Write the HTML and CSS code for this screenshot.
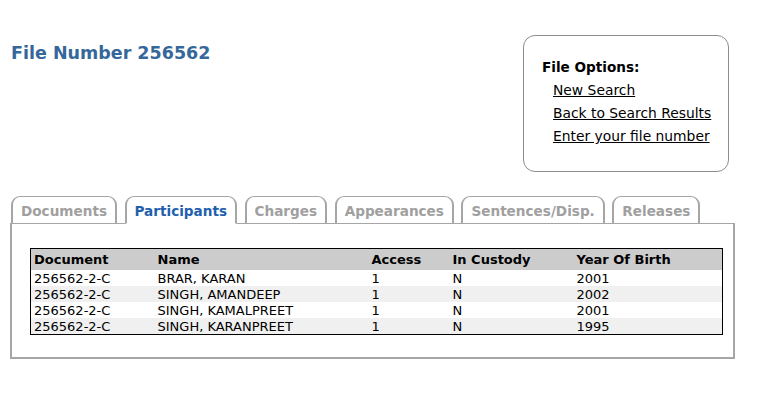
FILE: index.html
```html
<!DOCTYPE html>
<html>
<head>
<meta charset="utf-8">
<link rel="stylesheet" href="styles.css">
</head>
<body>
<div class="page">
  <div class="top">
    <h1 class="title">File Number 256562</h1>
    <div class="options">
      <div class="options-head">File Options:</div>
      <a href="#" class="opt">New Search</a>
      <a href="#" class="opt">Back to Search Results</a>
      <a href="#" class="opt">Enter your file number</a>
    </div>
  </div>
  <div class="tabs">
    <div class="tab">Documents</div>
    <div class="tab active">Participants</div>
    <div class="tab">Charges</div>
    <div class="tab">Appearances</div>
    <div class="tab">Sentences/Disp.</div>
    <div class="tab">Releases</div>
  </div>
  <div class="panel">
    <table class="grid">
      <colgroup>
        <col class="c1"><col class="c2"><col class="c3"><col class="c4"><col class="c5">
      </colgroup>
      <thead>
        <tr><th>Document</th><th>Name</th><th>Access</th><th>In Custody</th><th>Year Of Birth</th></tr>
      </thead>
      <tbody>
        <tr><td>256562-2-C</td><td>BRAR, KARAN</td><td>1</td><td>N</td><td>2001</td></tr>
        <tr class="alt"><td>256562-2-C</td><td>SINGH, AMANDEEP</td><td>1</td><td>N</td><td>2002</td></tr>
        <tr><td>256562-2-C</td><td>SINGH, KAMALPREET</td><td>1</td><td>N</td><td>2001</td></tr>
        <tr class="alt"><td>256562-2-C</td><td>SINGH, KARANPREET</td><td>1</td><td>N</td><td>1995</td></tr>
      </tbody>
    </table>
  </div>
</div>
</body>
</html>
```

FILE: styles.css
```css
html, body {
  margin: 0;
  padding: 0;
  background: #ffffff;
}
body {
  font-family: "DejaVu Sans", Verdana, sans-serif;
  color: #000;
}
.page {
  padding: 0 23px 0 10px;
}
.top {
  display: flex;
  justify-content: space-between;
  align-items: flex-start;
}
.title {
  margin: 42px 0 0 1px;
  font-size: 17.5px;
  line-height: 22px;
  font-weight: bold;
  color: #35679a;
}
.options {
  margin-top: 35px;
  margin-right: 6px;
  width: 206px;
  height: 137px;
  box-sizing: border-box;
  border: 1px solid #8c8c8c;
  border-radius: 12px;
  padding: 21px 0 0 18px;
  display: flex;
  flex-direction: column;
  align-items: flex-start;
}
.options-head {
  font-weight: bold;
  font-size: 13.6px;
  line-height: 20px;
  margin-bottom: 2px;
}
.opt {
  margin-left: 11px;
  font-size: 13.85px;
  line-height: 23px;
  color: #000;
  text-decoration: underline;
}
.tabs {
  display: flex;
  gap: 7.5px;
  margin-top: 24px;
  padding-left: 1px;
  position: relative;
  z-index: 1;
  margin-bottom: -1px;
}
.tab {
  height: 28px;
  box-sizing: border-box;
  border: 2px solid #a6a6a6;
  border-top-width: 1px;
  border-bottom: 1px solid #a6a6a6;
  border-radius: 9px 9px 0 0;
  padding: 4px 8px 0;
  font-size: 13.6px;
  font-weight: bold;
  color: #a0a0a0;
  background: #fff;
  line-height: 20px;
}
.tab.active {
  color: #1f60ae;
  border-bottom-color: #fff;
}
.panel {
  border: 2px solid #a6a6a6;
  border-top-width: 1px;
  height: 136px;
  box-sizing: border-box;
  padding: 24px 0 0 18px;
}
.grid {
  border-collapse: collapse;
  border: 1px solid #000;
  width: 692px;
  font-size: 13px;
  table-layout: fixed;
}
.c1 { width: 124px; }
.c2 { width: 214px; }
.c3 { width: 81px; }
.c4 { width: 124px; }
.c5 { width: 149px; }
.grid th {
  background: #cccccc;
  text-align: left;
  font-weight: bold;
  height: 20px;
  padding: 1px 0 0 3px;
  line-height: 20px;
}
.grid td {
  height: 15px;
  padding: 1px 0 0 3px;
  line-height: 15px;
  white-space: nowrap;
}
.grid tr.alt td {
  background: #f0f0f0;
}
```
